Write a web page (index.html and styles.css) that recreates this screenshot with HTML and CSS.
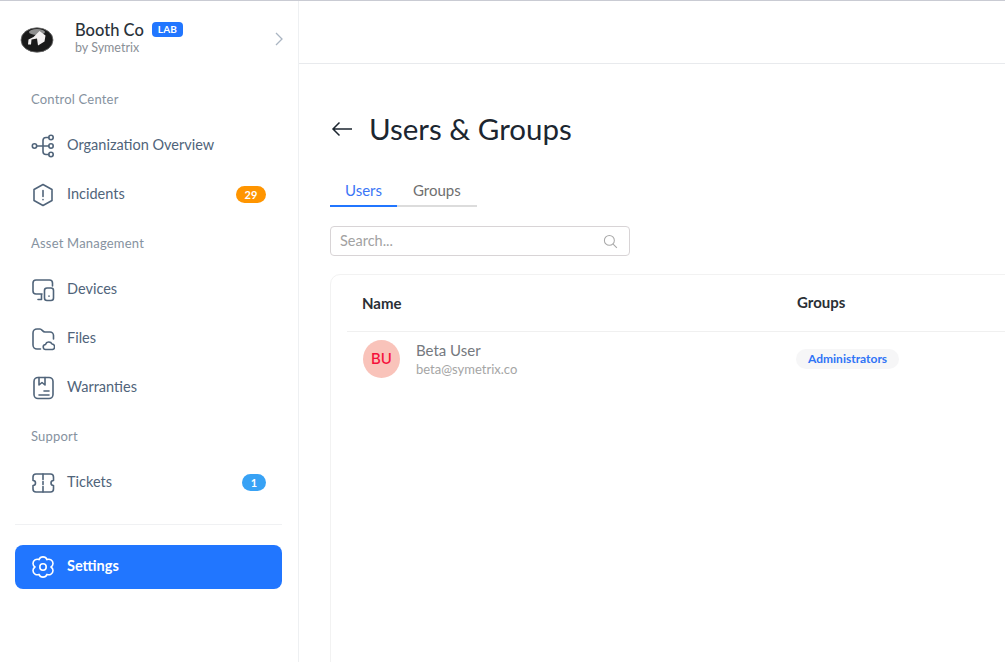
FILE: index.html
```html
<!DOCTYPE html>
<html lang="en">
  <head>
    <meta charset="UTF-8" />
    <meta name="viewport" content="width=device-width, initial-scale=1.0" />
    <title>Users &amp; Groups</title>
    <link rel="stylesheet" href="styles.css">
  </head>
  <body>
    <div class="app">
      <aside class="sidebar">
        <div class="brand">
          <svg class="brand_logo" viewBox="0 0 34 26" width="34" height="26">
            <ellipse cx="17" cy="13" rx="16" ry="12.200" fill="#1a1a1a" stroke="#6a6a6a" stroke-width="0.800"></ellipse>
            <ellipse cx="17" cy="5" rx="8" ry="3" fill="#8f8f8f"></ellipse>
            <path d="M8 17.500l.5-5 5-2.500 6-6 6 4.500-1 6-6.500 4-1-7-5.500 1-.5 5z" fill="#f4f1f1"></path>
          </svg>
          <div class="brand_text">
            <div class="brand_name">Booth Co <span class="brand_tag">LAB</span></div>
            <div class="brand_by">by Symetrix</div>
          </div>
          <svg class="brand_arrow" viewBox="0 0 8 14" width="8" height="14">
            <path d="M1 1l6 6-6 6"></path>
          </svg>
        </div>

        <div class="nav_label">Control Center</div>
        <a class="nav_item">
          <svg class="nav_icon" viewBox="0 0 24 24">
            <circle cx="3.500" cy="12" r="2.200"></circle>
            <circle cx="20" cy="3.500" r="2.200"></circle>
            <circle cx="20" cy="12" r="2.200"></circle>
            <circle cx="20" cy="20.500" r="2.200"></circle>
            <path d="M5.700 12H17.800M17.800 3.500h-2.800a3 3 0 0 0-3 3v11a3 3 0 0 0 3 3h2.800"></path>
          </svg>
          <span>Organization Overview</span>
        </a>
        <a class="nav_item">
          <svg class="nav_icon" viewBox="0 0 24 24">
            <path d="M12 1.500l9 5v11l-9 5-9-5v-11z"></path>
            <path d="M12 7.500v6M12 16.500v.2"></path>
          </svg>
          <span>Incidents</span>
          <b class="count count_orange">29</b>
        </a>

        <div class="nav_label nav_label_next">Asset Management</div>
        <a class="nav_item">
          <svg class="nav_icon" viewBox="0 0 24 24">
            <path d="M21.500 8V5a3 3 0 0 0-3-3H5a3 3 0 0 0-3 3v8a3 3 0 0 0 3 3h6M10.500 16v5.500H7"></path>
            <rect x="13.500" y="10" width="9" height="12.500" rx="2.500"></rect>
            <path d="M18 18v.2"></path>
          </svg>
          <span>Devices</span>
        </a>
        <a class="nav_item">
          <svg class="nav_icon" viewBox="0 0 24 24">
            <path d="M9.500 22H6a4 4 0 0 1-4-4V6a4 4 0 0 1 4-4h3c2 0 2.500 3 5 3h5a3.500 3.500 0 0 1 3.500 3.500V12"></path>
            <path d="M15 22.500a2.500 2.500 0 0 1-.5-5 3.500 3.500 0 0 1 6.500-.5 2.800 2.800 0 0 1 .5 5.500z"></path>
          </svg>
          <span>Files</span>
        </a>
        <a class="nav_item">
          <svg class="nav_icon" viewBox="0 0 24 24">
            <rect x="3" y="1.500" width="19" height="21" rx="4"></rect>
            <path d="M8 1.500V9l3-2.500L14 9V1.500M13 15h5M8 19h10"></path>
          </svg>
          <span>Warranties</span>
        </a>

        <div class="nav_label nav_label_next">Support</div>
        <a class="nav_item">
          <svg class="nav_icon" viewBox="0 0 24 24">
            <path d="M5 3h14.500a3 3 0 0 1 3 3v3.500a2.500 2.500 0 0 0 0 5V18a3 3 0 0 1-3 3H5a3 3 0 0 1-3-3v-3.500a2.500 2.500 0 0 0 0-5V6a3 3 0 0 1 3-3z"></path>
            <path d="M12 3v5.500M12 10.500v3M12 15.500V21"></path>
          </svg>
          <span>Tickets</span>
          <b class="count count_blue">1</b>
        </a>

        <div class="sidebar_rule"></div>

        <a class="nav_item nav_item_active">
          <svg class="nav_icon" viewBox="0 0 24 24">
            <path d="M8 4.600a4.300 4.300 0 0 1 8 0 4.300 4.300 0 0 1 6 3.900 4.300 4.300 0 0 1-2 3.500 4.300 4.300 0 0 1 2 3.500 4.300 4.300 0 0 1-6 3.900 4.300 4.300 0 0 1-8 0 4.300 4.300 0 0 1-6-3.900 4.300 4.300 0 0 1 2-3.500 4.300 4.300 0 0 1-2-3.500 4.300 4.300 0 0 1 6-3.900z"></path>
            <circle cx="12" cy="12" r="3.200"></circle>
          </svg>
          <span>Settings</span>
        </a>
      </aside>

      <main class="main">
        <div class="topbar"></div>
        <div class="content">
          <div class="title_row">
            <svg class="back" viewBox="0 0 22 16" width="22" height="16">
              <path d="M21 8H2M8.500 1.500L2 8l6.500 6.500"></path>
            </svg>
            <h1>Users &amp; Groups</h1>
          </div>

          <div class="tabs">
            <div class="tab tab_active">Users</div>
            <div class="tab">Groups</div>
          </div>

          <div class="search">
            <span>Search...</span>
            <svg viewBox="0 0 16 16" width="15" height="15">
              <circle cx="6.800" cy="6.800" r="5.300"></circle>
              <path d="M10.800 10.800l4 4"></path>
            </svg>
          </div>

          <div class="card">
            <div class="row row_head">
              <div class="col_name">Name</div>
              <div class="col_groups">Groups</div>
            </div>
            <div class="row row_user">
              <div class="col_name user">
                <div class="avatar">BU</div>
                <div>
                  <div class="user_name">Beta User</div>
                  <div class="user_mail">beta@symetrix.co</div>
                </div>
              </div>
              <div class="col_groups">
                <span class="chip">Administrators</span>
              </div>
            </div>
          </div>
        </div>
      </main>
    </div>
  </body>
</html>
```

FILE: styles.css
```css
*,
*:before,
*:after {
  box-sizing: border-box;
}
html,
body {
  height: 100%;
}
body {
  margin: 0;
  overflow: hidden;
  background: #fff;
  color: #1c2630;
  font: 15px/1.3 "Lato", "Noto Sans", sans-serif;
}
.app {
  display: flex;
  height: 100%;
  border-top: 1px solid #c9cbd3;
}

/* sidebar */
.sidebar {
  flex: none;
  width: 299px;
  padding: 0 16px 0 15px;
  border-right: 1px solid #eef0f2;
}
.brand {
  display: flex;
  align-items: center;
  height: 76px;
  padding: 0 0 0 5px;
}
.brand_logo {
  flex: none;
  margin-top: 1px;
}
.brand_text {
  flex: 1;
  margin: 0 0 3px 21px;
}
.brand_name {
  display: flex;
  align-items: center;
  font-size: 16.500px;
  line-height: 20px;
  font-weight: 500;
  color: #2a323a;
}
.brand_tag {
  margin-left: 8px;
  padding: 0 6px;
  border-radius: 4px;
  background: #2176ff;
  color: #fff;
  font-size: 10px;
  line-height: 15px;
  font-weight: 700;
  letter-spacing: 0.2px;
}
.brand_by {
  color: #8a8f96;
  font-size: 12.500px;
  line-height: 16px;
}
.brand_arrow {
  margin-right: -1px;
  fill: none;
  stroke: #aab5c2;
  stroke-width: 1.300;
}
.nav_label {
  height: 20px;
  margin: 12px 0 12px 16px;
  color: #8692a0;
  font-size: 13px;
  line-height: 20px;
  letter-spacing: 0.2px;
}
.nav_label_next {
  margin-top: 14px;
}
.nav_item {
  display: flex;
  align-items: center;
  height: 49px;
  padding: 0 16px;
  color: #50647a;
  font-size: 14.500px;
}
.nav_item span {
  flex: 1;
  margin-left: 12px;
  padding-bottom: 1px;
}
.nav_icon {
  flex: none;
  width: 24px;
  height: 24px;
  fill: none;
  stroke: currentColor;
  stroke-width: 1.600;
  stroke-linecap: round;
  stroke-linejoin: round;
}
.count {
  width: 30px;
  height: 17px;
  border-radius: 9px;
  color: #fff;
  font-size: 11px;
  line-height: 17px;
  text-align: center;
}
.count_orange {
  background: #ff9500;
}
.count_blue {
  width: 24px;
  background: #38a2f5;
}
.sidebar_rule {
  height: 1px;
  margin: 17px 0 20px;
  background: #f0f1f3;
}
.nav_item_active {
  height: 44px;
  border-radius: 8px;
  background: #2176ff;
  color: #fff;
  font-weight: 700;
}

/* main */
.main {
  flex: 1;
  min-width: 0;
  overflow: hidden;
}
.topbar {
  height: 63px;
  border-bottom: 1px solid #e8eaed;
}
.content {
  padding: 46px 0 0 31px;
}
.title_row {
  display: flex;
  align-items: center;
  height: 38px;
}
.back {
  flex: none;
  margin-left: 1px;
  fill: none;
  stroke: #1c2630;
  stroke-width: 1.500;
}
.title_row h1 {
  margin: 0 0 0 16px;
  font-size: 29.500px;
  line-height: 38px;
  font-weight: 400;
}
.tabs {
  display: flex;
  width: 146px;
  margin-top: 28px;
}
.tab {
  height: 31px;
  padding: 0 16px;
  border-bottom: 2px solid #dcdcdc;
  color: #6f6f6f;
  font-size: 15px;
  line-height: 28px;
  flex: 1;
  text-align: center;
}
.tab_active {
  flex: none;
  width: 67px;
  padding: 0 17px 0 15px;
  border-bottom-color: #2176ff;
  color: #3b76f6;
}
.search {
  display: flex;
  align-items: center;
  justify-content: space-between;
  width: 300px;
  height: 30px;
  margin-top: 19px;
  padding: 0 11px 0 9px;
  border: 1px solid #d8d4d6;
  border-radius: 4px;
  color: #a2a2a2;
  font-size: 14.500px;
}
.search svg {
  fill: none;
  stroke: #a8a8a8;
  stroke-width: 1.100;
}
.card {
  height: 400px;
  margin: 18px -40px 0 0;
  padding-left: 16px;
  border: 1px solid #f2f2f2;
  border-radius: 10px;
}
.row {
  display: flex;
}
.row_head {
  align-items: center;
  height: 57px;
  padding-top: 2px;
  border-bottom: 1px solid #f0f0f0;
  font-weight: 700;
  font-size: 15px;
  color: #2a2f35;
}
.row_user {
  align-items: center;
  height: 54px;
}
.col_name {
  width: 450px;
  padding-left: 15px;
}
.col_groups {
  padding-bottom: 2px;
}
.user {
  display: flex;
  align-items: center;
}
.avatar {
  flex: none;
  width: 37px;
  height: 38px;
  margin: 0 16px 0 1px;
  border-radius: 50%;
  background: #f9c3ba;
  color: #f5113b;
  font-family: "Inter", sans-serif;
  font-size: 15px;
  font-weight: 500;
  line-height: 38px;
  text-align: center;
}
.user_name {
  margin-bottom: 1px;
  color: #75797e;
  font-size: 15px;
  line-height: 20px;
}
.user_mail {
  color: #a5a5a5;
  font-size: 13px;
  line-height: 17px;
}
.chip {
  display: inline-block;
  height: 20px;
  margin-left: -1px;
  padding: 0 12px;
  border-radius: 10px;
  background: #f6f6f7;
  color: #2f74f6;
  font-size: 12px;
  font-weight: 700;
  line-height: 20px;
}
```
